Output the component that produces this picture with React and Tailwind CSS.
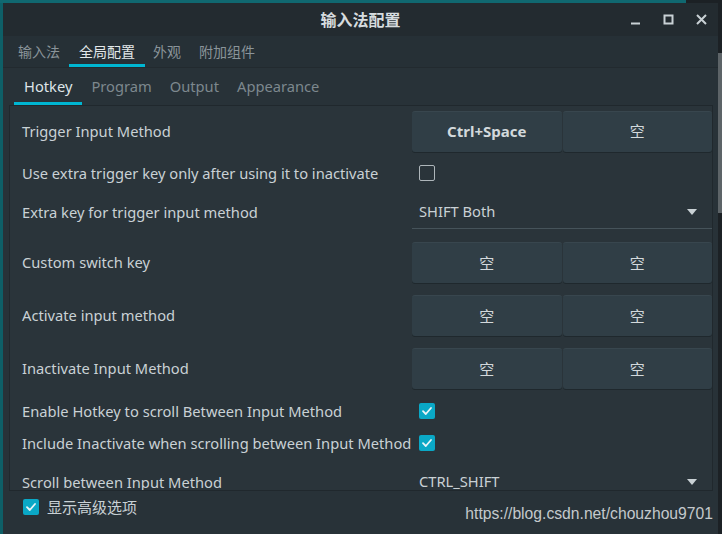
import React from 'react';

const font = { fontFamily: '"Noto Sans", "Noto Sans CJK SC", sans-serif' };

const KeyButton = ({ label, bold }) => (
  <div className={`flex-1 h-[41px] rounded-[3px] bg-[#303e46] border-t border-[#38464e] shadow-[0_1px_0_#1f282d] flex items-center justify-center text-[15px] text-[#d3d9dc] ${bold ? 'font-bold' : ''}`}>
    {label}
  </div>
);

const KeyPair = ({ first = '空', bold }) => (
  <div className="w-[300px] flex gap-[1px]">
    <KeyButton label={first} bold={bold} />
    <KeyButton label="空" />
  </div>
);

const Check = ({ checked }) =>
  checked ? (
    <div className="w-[16px] h-[16px] rounded-[2px] bg-[#0aa8c6] flex items-center justify-center">
      <svg width="12" height="12" viewBox="0 0 12 12" fill="none">
        <path d="M2 6.2 L4.8 9 L10 3" stroke="#e8f4f7" strokeWidth="1.8" strokeLinecap="round" strokeLinejoin="round" />
      </svg>
    </div>
  ) : (
    <div className="w-[16px] h-[16px] rounded-[2px] border-[1.5px] border-[#aeb6ba]" />
  );

const Combo = ({ value }) => (
  <div className="w-[300px] h-[34px] border-b border-[#46535a] flex items-center justify-between pl-[7px] pr-[15px] text-[14.7px] text-[#c9d1d5]">
    <span>{value}</span>
    <svg width="10" height="6" viewBox="0 0 10 6">
      <path d="M0 0 H10 L5 6 Z" fill="#c9d1d5" />
    </svg>
  </div>
);

const Row = ({ h, label, children }) => (
  <div className={`shrink-0 flex items-center justify-between pl-[12px] ${h}`}>
    <span className="text-[14.7px] text-[#c9d1d5] whitespace-nowrap">{label}</span>
    <div className="w-[300px] shrink-0 flex">{children}</div>
  </div>
);

export default function App() {
  return (
    <div className="w-[722px] h-[534px] overflow-hidden bg-[#0d5a62] flex flex-col" style={font}>
      <div className="h-[3px] flex">
        <div className="flex-1 bg-[#106870]" />
        <div className="w-[36px] bg-[#1c2125]" />
      </div>
      <div className="flex flex-1">
        <div className="w-[3px] bg-[#0e5f67]" />
        <div className="w-[715px] flex flex-col bg-[#283238]">
          {/* title bar */}
          <div className="h-[33px] bg-[#232b30] flex items-center relative">
            <div className="flex-1 text-center text-[16px] font-bold text-[#d6dcdf]">输入法配置</div>
            <div className="absolute right-[11px] top-0 h-[33px] flex items-center gap-[22px]">
              <svg width="11" height="11" viewBox="0 0 11 11"><rect x="1" y="8.5" width="9" height="2" fill="#c9d1d5" /></svg>
              <svg width="11" height="11" viewBox="0 0 11 11"><rect x="1.5" y="1.5" width="8" height="8" fill="none" stroke="#c9d1d5" strokeWidth="2" /></svg>
              <svg width="11" height="11" viewBox="0 0 11 11"><path d="M1 1 L10 10 M10 1 L1 10" stroke="#c9d1d5" strokeWidth="2" /></svg>
            </div>
          </div>
          {/* top tabs */}
          <div className="h-[32px] bg-[#263036] flex items-end pl-[5px] text-[14px] border-b border-[#222a2f]">
            <div className="pl-[10px] pr-[9px] h-full flex items-center text-[#8a949a]">输入法</div>
            <div className="px-[10px] h-full flex items-center text-[#e3e8ea] border-b-[3px] border-[#00b6d2] pt-[3px]">全局配置</div>
            <div className="px-[8px] h-full flex items-center text-[#8a949a]">外观</div>
            <div className="px-[10px] h-full flex items-center text-[#8a949a]">附加组件</div>
          </div>
          {/* content */}
          <div className="flex-1 flex flex-col pl-[6px] pr-[5px]">
            <div className="h-[37px] flex items-end pl-[5px] text-[14.7px]">
              <div className="h-full px-[10px] flex items-center text-[#dfe5e8] border-b-[3px] border-[#00b6d2] pt-[3px]">Hotkey</div>
              <div className="h-full px-[9px] flex items-center text-[#7d888e]">Program</div>
              <div className="h-full px-[9px] flex items-center text-[#7d888e]">Output</div>
              <div className="h-full px-[9px] flex items-center text-[#7d888e]">Appearance</div>
            </div>
            <div className="h-[386px] border border-[#20282d] bg-[#2a343a] overflow-hidden flex flex-col">
              <Row h="h-[49px] pt-[1px]" label="Trigger Input Method"><KeyPair first="Ctrl+Space" bold /></Row>
              <Row h="h-[36px]" label="Use extra trigger key only after using it to inactivate">
                <div className="pl-[7px]"><Check /></div>
              </Row>
              <Row h="h-[42px]" label="Extra key for trigger input method"><Combo value="SHIFT Both" /></Row>
              <Row h="h-[59px]" label="Custom switch key"><KeyPair /></Row>
              <Row h="h-[47px]" label="Activate input method"><KeyPair /></Row>
              <Row h="h-[59px]" label="Inactivate Input Method"><KeyPair /></Row>
              <Row h="h-[26px]" label="Enable Hotkey to scroll Between Input Method">
                <div className="pl-[7px]"><Check checked /></div>
              </Row>
              <Row h="h-[38px]" label="Include Inactivate when scrolling between Input Method">
                <div className="pl-[7px]"><Check checked /></div>
              </Row>
              <Row h="h-[40px]" label="Scroll between Input Method"><Combo value="CTRL_SHIFT" /></Row>
            </div>
            <div className="flex-1 flex items-start justify-between pl-[14px] pt-[5px]">
              <div className="flex items-center gap-[8px] text-[15px] text-[#c9d1d5]">
                <Check checked />
                <span>显示高级选项</span>
              </div>
              <div className="pt-[6px] text-[15.7px] text-[#c4c9cc]" style={{ fontFamily: '"Liberation Sans", Arial, sans-serif' }}>
                https://blog.csdn.net/chouzhou9701
              </div>
            </div>
          </div>
        </div>
        <div className="w-[4px] bg-[#1c2125] flex flex-col">
          <div className="h-[50px]" />
          <div className="h-[160px] bg-[#5d6468]" />
        </div>
      </div>
    </div>
  );
}
